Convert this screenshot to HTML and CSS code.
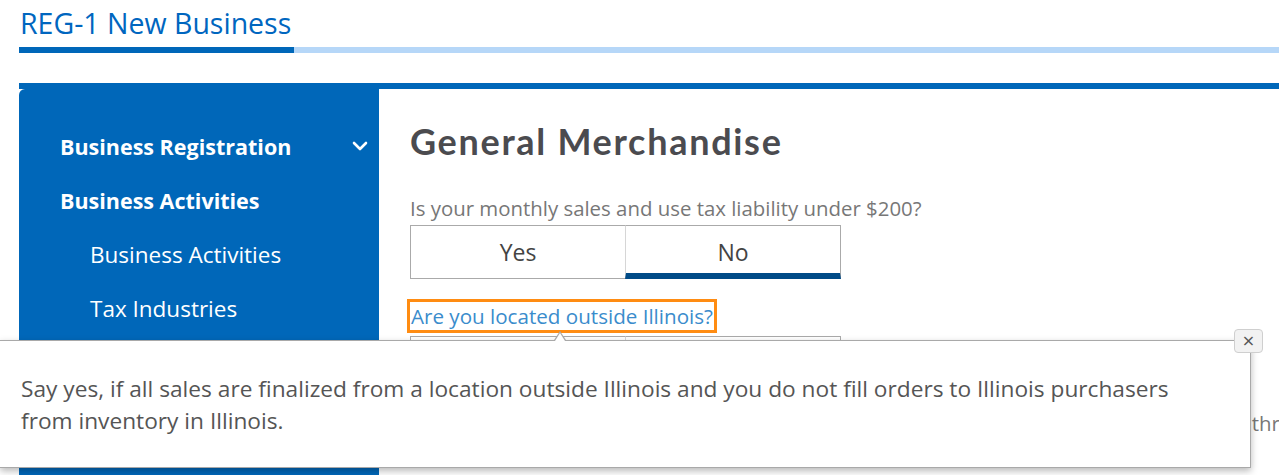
FILE: index.html
```html
<!DOCTYPE html>
<html lang="en">
<head>
<meta charset="utf-8">
<title>REG-1 New Business</title>
<link rel="stylesheet" href="styles.css">
</head>
<body>
<div class="page">
  <header class="title-bar">
    <h1 class="title">REG-1 New Business</h1>
  </header>

  <div class="card">
    <nav class="sidebar">
      <a class="nav-item nav-top nav-expand">
        <span>Business Registration</span>
        <svg class="chevron" width="16" height="10" viewBox="0 0 16 10"><polyline points="2,2 8,8 14,2" fill="none" stroke="#fff" stroke-width="2.6" stroke-linecap="round" stroke-linejoin="round"/></svg>
      </a>
      <a class="nav-item nav-top">Business Activities</a>
      <a class="nav-item nav-sub">Business Activities</a>
      <a class="nav-item nav-sub">Tax Industries</a>
      <a class="nav-item nav-sub">General Merchandise</a>
    </nav>

    <main class="content">
      <h2 class="heading">General Merchandise</h2>

      <section class="question">
        <p class="q-label">Is your monthly sales and use tax liability under $200?</p>
        <div class="toggle">
          <button class="toggle-btn">Yes</button>
          <button class="toggle-btn selected">No</button>
        </div>
      </section>

      <section class="question q-help">
        <a class="q-link" href="#">Are you located outside Illinois?</a>
        <div class="toggle">
          <button class="toggle-btn">Yes</button>
          <button class="toggle-btn">No</button>
        </div>
      </section>

      <section class="question q-third">
        <p class="q-label">Will you make retail sales of general merchandise to Illinois customers in person, or only through the mail?</p>
        <div class="toggle">
          <button class="toggle-btn">Yes</button>
          <button class="toggle-btn">No</button>
        </div>
      </section>
    </main>
  </div>

  <div class="popover">
    <span class="popover-arrow"></span>
    <button class="popover-close">&times;</button>
    <p class="popover-text">Say yes, if all sales are finalized from a location outside Illinois and you do not fill orders to Illinois purchasers from inventory in Illinois.</p>
  </div>
</div>
</body>
</html>
```

FILE: styles.css
```css
html, body {
  margin: 0;
  padding: 0;
  overflow: hidden;
  background: #fff;
}

body {
  font-family: "Open Sans", "Noto Sans", sans-serif;
  color: #333;
}

.page {
  position: relative;
  width: 1500px;
  height: 475px;
  overflow: hidden;
}

/* Title */
.title-bar {
  margin-left: 19px;
  border-bottom: 6px solid #b6d7f8;
}

.title {
  display: inline-block;
  margin: 0 0 -6px 0;
  padding: 5px 3px 6px 1px;
  font-size: 28.5px;
  line-height: 36px;
  font-weight: 400;
  color: #0066bf;
  border-bottom: 6px solid #0067b9;
}

/* Card */
.card {
  margin: 30px 0 0 19px;
  border-top: 6px solid #0067b9;
  display: flex;
  height: 400px;
}

.sidebar {
  width: 360px;
  flex: none;
  background: #0067b9;
  border-top-left-radius: 6px;
  padding-top: 31px;
  box-sizing: border-box;
  display: flex;
  flex-direction: column;
}

.nav-item {
  display: flex;
  align-items: center;
  justify-content: space-between;
  color: #fff;
  font-size: 22.5px;
  line-height: 30px;
  padding: 12px 11px 12px 41px;
  text-decoration: none;
}

.nav-top {
  font-weight: 700;
  font-size: 21.5px;
}

.nav-sub {
  padding-left: 71px;
}

.chevron {
  margin-top: -2px;
}

/* Content */
.content {
  flex: 1;
  padding: 31px 0 0 31px;
}

.heading {
  margin: 0 0 32px 0;
  font-family: Lato, "Open Sans", sans-serif;
  font-weight: 700;
  font-size: 36px;
  line-height: 42px;
  letter-spacing: 1.7px;
  color: #4b4b4f;
}

.question {
  display: flex;
  flex-direction: column;
  align-items: flex-start;
}

.q-label {
  margin: 0 0 3px 0;
  font-size: 20.4px;
  line-height: 28px;
  color: #777;
  white-space: nowrap;
}

.toggle {
  display: flex;
  width: 432px;
}

.toggle-btn {
  width: 216px;
  height: 54px;
  border: 1px solid #aaa;
  background: #fff;
  font-family: "Open Sans", "Noto Sans", sans-serif;
  font-size: 23px;
  color: #444;
  padding: 0;
  margin: 0;
}

.toggle-btn + .toggle-btn {
  border-left-color: #d6d6d6;
  margin-left: -1px;
}

.toggle-btn.selected {
  border-bottom: 6px solid #004b87;
  padding-top: 5px;
}

.q-help {
  margin-top: 23px;
}

.q-link {
  display: inline-block;
  margin: 0 0 6px 0;
  padding: 0 1px;
  font-size: 20.6px;
  line-height: 28px;
  color: #3a8ccc;
  text-decoration: none;
  outline: 3px solid #ff8c12;
}

.q-third {
  margin-top: 19px;
}

.q-third .q-label {
  margin-bottom: 40px;
}

/* Popover */
.popover {
  position: absolute;
  left: 0;
  top: 340px;
  width: 1251px;
  height: 128px;
  box-sizing: border-box;
  background: #fff;
  border: 1px solid #a9a9a9;
  border-left: none;
  box-shadow: 0 3px 7px rgba(0, 0, 0, 0.28);
  padding: 32px 60px 0 21px;
}

.popover-arrow {
  position: absolute;
  left: 554px;
  top: -10px;
  width: 0;
  height: 0;
  border-left: 6px solid transparent;
  border-right: 6px solid transparent;
  border-bottom: 9px solid #a9a9a9;
}

.popover-arrow::after {
  content: "";
  position: absolute;
  left: -5px;
  top: 2px;
  border-left: 5px solid transparent;
  border-right: 5px solid transparent;
  border-bottom: 8px solid #fff;
}

.popover-close {
  position: absolute;
  right: -13px;
  top: -12px;
  width: 29px;
  height: 24px;
  padding: 0;
  border: 1px solid #cfcfcf;
  border-radius: 4px;
  background: #f2f2f2;
  color: #555;
  font-family: "DejaVu Sans", sans-serif;
  font-size: 16px;
  line-height: 20px;
}

.popover-text {
  margin: 0;
  font-size: 22.7px;
  line-height: 32px;
  color: #555;
}
```
